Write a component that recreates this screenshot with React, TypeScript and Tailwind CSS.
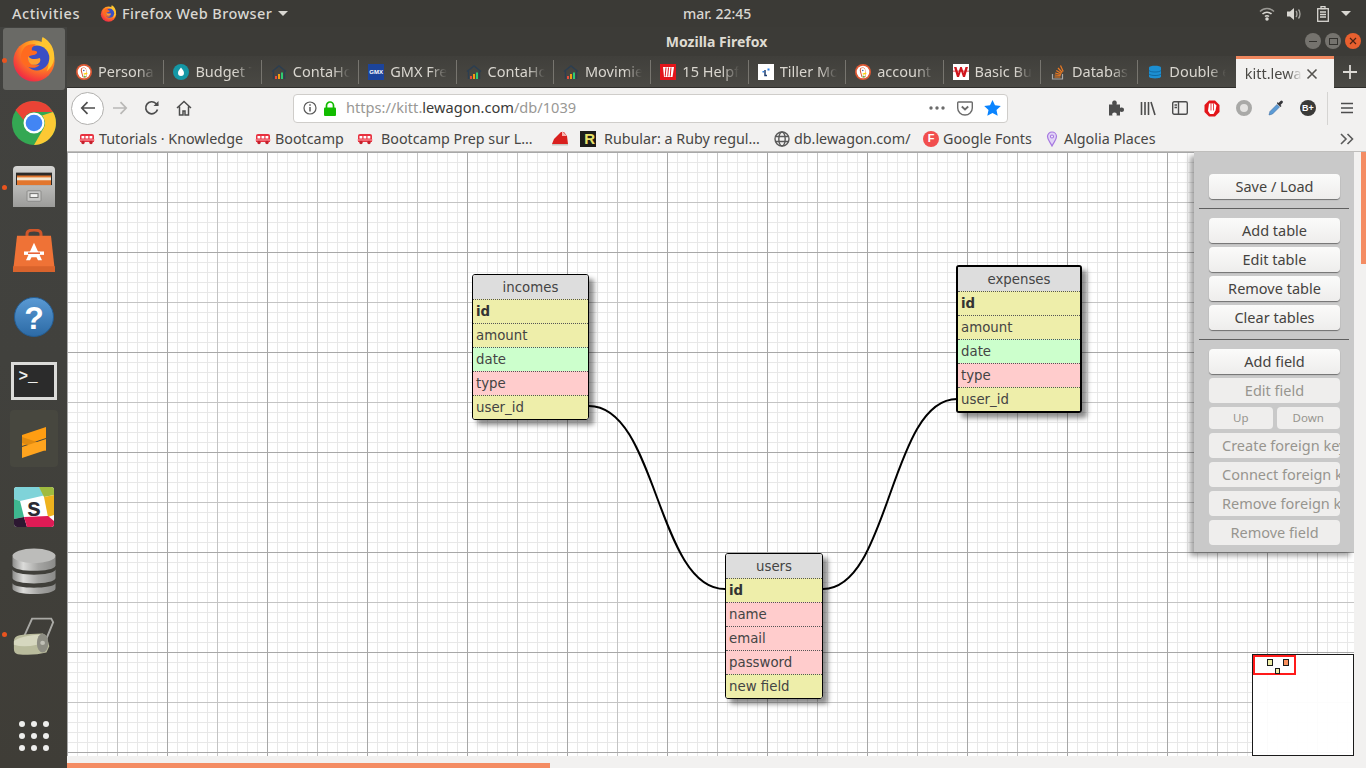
import { ReactNode } from 'react'

const UI = 'font-["Noto_Sans",sans-serif]'

function Ddg() {
  return (
    <svg width="16" height="16" viewBox="0 0 16 16">
      <circle cx="8" cy="8" r="8" fill="#de5833" />
      <circle cx="8" cy="8" r="6.3" fill="#fff" />
      <path d="M5 4.500c1.500-1.500 4-1.300 5 .3 1 2 .3 5 .8 8.200-2 .6-3.400.6-4.300.1C6 10 4 7 5 4.500z" fill="#de5833" />
      <path d="M6 4.500c1.500-1 3.500-.5 4 1 .6 2 0 4.500.5 7-1.500.4-2.500.4-3.300.1C7 10 5.200 6.500 6 4.500z" fill="#fff" />
      <path d="M7.500 9.500l3.500-1 .5 1.500-3.500.7z" fill="#fdd20a" />
      <path d="M7.500 11.500l2 .4.700 1.300-2.200.2z" fill="#65bc46" />
      <circle cx="7.800" cy="6.500" r=".7" fill="#2d4f8e" />
    </svg>
  )
}

function Budget() {
  return (
    <svg width="16" height="16" viewBox="0 0 16 16">
      <circle cx="8" cy="8" r="8" fill="#1497a5" />
      <path d="M8 3.500c1.500 2 3 3.500 3 5.500a3 3 0 0 1-6 0c0-2 1.500-3.500 3-5.500z" fill="#fff" />
    </svg>
  )
}

function Conta() {
  return (
    <svg width="16" height="16" viewBox="0 0 16 16">
      <path d="M1 7.500L8 2l7 5.500M2.500 7v8M13.500 7v8" fill="none" stroke="#2c3e50" strokeWidth="1.400" />
      <rect x="4" y="12" width="2" height="3" fill="#e74c3c" />
      <rect x="7" y="10" width="2" height="5" fill="#f39c12" />
      <rect x="10" y="8.500" width="2" height="6.500" fill="#2ecc71" />
    </svg>
  )
}

function Gmx() {
  return (
    <div className="flex h-4 w-4 items-center justify-center bg-[#1c449b] font-['Liberation_Sans',sans-serif] text-[6px] font-bold leading-none text-white">
      GMX
    </div>
  )
}

function Helpful() {
  return (
    <svg width="16" height="16" viewBox="0 0 16 16">
      <rect width="16" height="16" fill="#e3151a" />
      <path d="M3 3h11l-1.500 10h-8.500z" fill="#fff" />
      <path d="M6 3.500l-.8 9M8.500 3.500l-.8 9M11 3.500l-.8 9" stroke="#e3151a" strokeWidth="1" />
    </svg>
  )
}

function Tiller() {
  return (
    <svg width="16" height="16" viewBox="0 0 16 16">
      <rect width="16" height="16" fill="#fff" />
      <path d="M7 6v5.500h2" fill="none" stroke="#1d3d6e" strokeWidth="1.500" />
      <rect x="9.500" y="4.500" width="2" height="2" fill="#2a7de1" />
      <rect x="4.500" y="7" width="1.500" height="1.500" fill="#2a7de1" />
    </svg>
  )
}

function Basic() {
  return (
    <svg width="16" height="16" viewBox="0 0 16 16">
      <rect width="16" height="16" fill="#fff" />
      <path d="M1 3l3 10h2l2-6 2 6h2l3-10h-2.500l-1.700 6L8.800 3H7.200L5.200 9 3.500 3z" fill="#d0141c" />
      <rect y="6.500" width="16" height="1.300" fill="#d0141c" opacity=".6" />
    </svg>
  )
}

function Stack() {
  return (
    <svg width="16" height="16" viewBox="0 0 16 16">
      <path d="M2.500 10v5h10v-5" fill="none" stroke="#a8a8a8" strokeWidth="1.200" />
      <path d="M4.500 13h6M4.700 11l6 .5M5.200 9l5.800 1.500M6.300 6.500l5.200 3M8 4l4.300 4.500M10.500 1.500l2.700 6" stroke="#ef7a21" strokeWidth="1.200" />
    </svg>
  )
}

function DbFav() {
  return (
    <svg width="16" height="16" viewBox="0 0 16 16">
      <path d="M2 3.500C2 1 14 1 14 3.500v9c0 2.500-12 2.500-12 0z" fill="#1c8fd2" />
      <path d="M2 6.500c1.500 2 10.500 2 12 0M2 10c1.500 2 10.500 2 12 0" fill="none" stroke="#0d5f96" strokeWidth=".8" />
    </svg>
  )
}

function Bus() {
  return (
    <svg width="16" height="12" viewBox="0 0 16 12">
      <path d="M1 2.500Q1 1 3 1h10q2 0 2 1.500V9H1z" fill="#e8313f" />
      <rect x="2.500" y="3" width="2.800" height="2.500" fill="#fff" />
      <rect x="6.500" y="3" width="2.800" height="2.500" fill="#fff" />
      <rect x="10.500" y="3" width="2.800" height="2.500" fill="#fff" />
      <rect x="0" y="6.500" width="16" height="1" fill="#f9a6ac" />
      <circle cx="4" cy="9.500" r="1.700" fill="#c3202c" />
      <circle cx="12" cy="9.500" r="1.700" fill="#c3202c" />
    </svg>
  )
}

const tabs: { icon: ReactNode; label: string }[] = [
  { icon: <Ddg />, label: 'Persona' },
  { icon: <Budget />, label: 'Budget T' },
  { icon: <Conta />, label: 'ContaHo' },
  { icon: <Gmx />, label: 'GMX Fre' },
  { icon: <Conta />, label: 'ContaHo' },
  { icon: <Conta />, label: 'Movimie' },
  { icon: <Helpful />, label: '15 Helpf' },
  { icon: <Tiller />, label: 'Tiller Mo' },
  { icon: <Ddg />, label: 'account' },
  { icon: <Basic />, label: 'Basic Bu' },
  { icon: <Stack />, label: 'Databas' },
  { icon: <DbFav />, label: 'Double e' },
]

function FirefoxLogo({ size }: { size: number }) {
  return (
    <svg width={size} height={size} viewBox="0 0 48 48">
      <defs>
        <radialGradient id="ffo" cx="0.7" cy="0.2" r="1">
          <stop offset="0" stopColor="#ffd43a" />
          <stop offset="0.45" stopColor="#ff8a1f" />
          <stop offset="0.8" stopColor="#f3353f" />
          <stop offset="1" stopColor="#d5166a" />
        </radialGradient>
      </defs>
      <circle cx="24" cy="26" r="21.500" fill="url(#ffo)" />
      <path d="M33 1c8 4 13 13 12 23-1 6-4 10-8 13 3-6 3-12 0-17-2-4-6-6-5-12 0-3 0-5 1-7z" fill="#ffc52e" />
      <circle cx="27" cy="23" r="13" fill="#3a4fc4" />
      <path d="M14 12c3-3 8-4 12-3-4 2-5 4-4 6 4 0 6 1 5 3-2 3-8 1-9 5-1 4 5 9 12 7-3 4-12 5-17-1-4-5-3-12 1-17z" fill="#ff6a1f" />
      <path d="M18 21c2 3 7 4 12 2 2 3-1 8-7 7-4-1-6-5-5-9z" fill="#ffa030" />
    </svg>
  )
}

function TopBar() {
  return (
    <div className={`${UI} flex h-[27px] items-center bg-[#3b3a36] text-[14px] font-medium text-[#d9d7d2]`}>
      <span className="ml-3 w-[88px] text-[14.500px] tracking-[0.55px]">Activities</span>
      <FirefoxLogo size={17} />
      <span className="ml-[5px] text-[14.500px] tracking-[0.4px]">Firefox Web Browser</span>
      <svg width="10" height="5" viewBox="0 0 10 5" className="ml-[6px]"><path d="M0 0h10L5 5z" fill="#d9d7d2" /></svg>
      <span className="absolute left-[683px]">mar. 22:45</span>
      <div className="ml-auto mr-[15px] flex items-center">
        <svg width="16" height="14" viewBox="0 0 16 14" fill="none" stroke="#d9d7d2" strokeWidth="1.500">
          <path d="M1 4.500c4-4 10-4 14 0" opacity=".6" />
          <path d="M3.500 7c2.500-2.500 6.500-2.500 9 0" />
          <path d="M6 9.500c1-1 3-1 4 0" />
          <circle cx="8" cy="12" r="1" fill="#d9d7d2" />
        </svg>
        <svg width="16" height="14" viewBox="0 0 16 14" fill="none" className="ml-[11px]">
          <path d="M1 4.500h3L8 1v12L4 9.500H1z" fill="#d9d7d2" />
          <path d="M10 4c1.300 1.500 1.300 4.500 0 6M12.500 2.500c2 2.500 2 6.500 0 9" stroke="#d9d7d2" strokeWidth="1.300" opacity=".7" />
        </svg>
        <svg width="12" height="16" viewBox="0 0 12 16" fill="none" stroke="#d9d7d2" strokeWidth="1.300" className="ml-[15px]">
          <rect x=".7" y="2.700" width="10.600" height="12.600" />
          <path d="M4 .7h4v2H4zM3 6h6M3 8.500h6M3 11h6" />
        </svg>
        <svg width="10" height="5" viewBox="0 0 10 5" className="ml-[12px]"><path d="M0 0h10L5 5z" fill="#d9d7d2" /></svg>
      </div>
    </div>
  )
}

function TitleBar() {
  return (
    <div className={`${UI} relative flex h-[29px] items-center justify-center bg-[#3c3b37] text-[14px] font-bold text-[#dfdbd2]`}>
      Mozilla Firefox
      <div className="absolute right-[5px] top-[6px] flex gap-[4px]">
        <div className="flex h-[16px] w-[16px] items-center justify-center rounded-full bg-[#75736e]">
          <div className="h-[1px] w-[8px] bg-[#33322e]" />
        </div>
        <div className="flex h-[16px] w-[16px] items-center justify-center rounded-full bg-[#75736e]">
          <div className="h-[7px] w-[9px] border border-[#33322e]" />
        </div>
        <div className="flex h-[16px] w-[16px] items-center justify-center rounded-full bg-[#e9602f]">
          <svg width="8" height="8" viewBox="0 0 8 8"><path d="M1 1l6 6M7 1L1 7" stroke="#4a2214" strokeWidth="1.200" /></svg>
        </div>
      </div>
    </div>
  )
}

function TabStrip() {
  return (
    <div className={`${UI} flex h-[32px] items-stretch border-b border-[#2f2e2b] bg-[linear-gradient(to_bottom,#403f3b,#4a4944)] text-[14.500px] text-[#d9d6cf]`}>
      {tabs.map((t, i) => (
        <div key={i} className="flex w-[97.400px] shrink-0 items-center">
          <div className="ml-[9px] flex w-[16px] shrink-0 justify-center">{t.icon}</div>
          <div className="ml-[6px] w-[57px] overflow-hidden whitespace-nowrap [mask-image:linear-gradient(to_right,#000_70%,transparent)]">
            {t.label}
          </div>
          {i < tabs.length - 1 && <div className="ml-auto h-[24px] w-[1px] bg-[#77756f]" />}
        </div>
      ))}
      <div className="mb-[-1px] flex w-[98px] shrink-0 items-center border-t-[3px] border-[#f0875e] bg-[#f2f1f0] pl-[9px] text-[#4a4945]">
        <div className="w-[57px] overflow-hidden whitespace-nowrap [mask-image:linear-gradient(to_right,#000_75%,transparent)]">
          kitt.lewa
        </div>
        <svg width="12" height="12" viewBox="0 0 12 12" className="ml-[4px]"><path d="M1.500 1.500l9 9M10.500 1.500l-9 9" stroke="#55534f" strokeWidth="1.600" /></svg>
      </div>
      <div className="ml-[9px] flex items-center">
        <svg width="14" height="14" viewBox="0 0 14 14"><path d="M7 0v14M0 7h14" stroke="#dcdad5" strokeWidth="1.800" /></svg>
      </div>
    </div>
  )
}

function NavBar() {
  return (
    <div className={`${UI} flex h-[40px] items-center bg-[#f2f1f0]`}>
      <div className="ml-[4px] flex h-[33px] w-[33px] items-center justify-center rounded-full border border-[#b1b0ae] bg-white">
        <svg width="16" height="14" viewBox="0 0 16 14" fill="none" stroke="#4d4d4d" strokeWidth="1.700"><path d="M15 7H2M7.500 1.200L1.800 7l5.700 5.800" /></svg>
      </div>
      <svg width="16" height="14" viewBox="0 0 16 14" fill="none" stroke="#b9b8b6" strokeWidth="1.700" className="ml-[8px]"><path d="M1 7h13M8.500 1.200L14.200 7l-5.700 5.800" /></svg>
      <svg width="16" height="16" viewBox="0 0 16 16" fill="none" stroke="#4d4d4d" strokeWidth="1.700" className="ml-[16px]">
        <path d="M13.500 9.500A6 6 0 1 1 12 3.500L14 5.500" />
        <path d="M14.500 1v5h-5" fill="#4d4d4d" stroke="none" />
      </svg>
      <svg width="16" height="16" viewBox="0 0 16 16" fill="none" stroke="#4d4d4d" strokeWidth="1.500" className="ml-[16px]">
        <path d="M1 8l7-6.500L15 8M3.500 6.500V15H7v-4h2v4h3.500V6.500" />
      </svg>
      <div className="ml-[101px] flex h-[29px] w-[715px] items-center rounded-[4px] border border-[#cfcdca] bg-white text-[14.600px]">
        <svg width="14" height="14" viewBox="0 0 14 14" fill="none" stroke="#5a5a5a" className="ml-[9px]">
          <circle cx="7" cy="7" r="6" strokeWidth="1.200" />
          <path d="M7 6v4.500" strokeWidth="1.500" />
          <path d="M7 3.200v1.500" strokeWidth="1.500" />
        </svg>
        <svg width="14" height="15" viewBox="0 0 14 15" className="ml-[6px]">
          <path d="M3.500 7V4.500a3.500 3.500 0 0 1 7 0V7" fill="none" stroke="#12bc00" strokeWidth="1.700" />
          <rect x="1" y="6.500" width="12" height="8.500" rx="1" fill="#12bc00" />
        </svg>
        <span className="ml-[9px] whitespace-nowrap text-[#999895]">
          https://kitt.<span className="text-[#3a3a38]">lewagon.com</span>/db/1039
        </span>
        <div className="ml-auto mr-[6px] flex items-center">
          <svg width="16" height="4" viewBox="0 0 16 4" fill="#6b6b6b"><circle cx="2" cy="2" r="1.700" /><circle cx="8" cy="2" r="1.700" /><circle cx="14" cy="2" r="1.700" /></svg>
          <svg width="16" height="15" viewBox="0 0 16 15" fill="none" stroke="#6b6b6b" strokeWidth="1.400" className="ml-[12px]">
            <path d="M1.500 1h13q.8 0 .8.800V7a7.300 7 0 0 1-14.600 0V1.800q0-.8.800-.8z" />
            <path d="M4.800 5.500L8 8.500l3.200-3" strokeWidth="1.800" />
          </svg>
          <svg width="17" height="16" viewBox="0 0 17 16" className="ml-[11px]">
            <path d="M8.500 0l2.500 5.300 5.800.7-4.300 4 1.200 5.800-5.200-2.900-5.200 2.900 1.200-5.800L.2 6l5.800-.7z" fill="#0a84ff" />
          </svg>
        </div>
      </div>
      <svg width="17" height="16" viewBox="0 0 17 16" fill="#4d4d4d" className="ml-[100px]">
        <path d="M1 4.500h3.500C3.500 2 5 .5 6.500.5S9.500 2 8.500 4.500H12v3.500c2-1 4-.3 4 1.700S14 12.500 12 11.500V15.500H8.500c1-2-.5-3-2-3s-3 1-2 3H1z" />
      </svg>
      <svg width="16" height="15" viewBox="0 0 16 15" fill="none" stroke="#4d4d4d" strokeWidth="1.600" className="ml-[15px]">
        <path d="M1.500 1v13M5 1v13M8.500 1v13M11 1l4 13" />
      </svg>
      <svg width="16" height="14" viewBox="0 0 16 14" fill="none" stroke="#4d4d4d" strokeWidth="1.400" className="ml-[16px]">
        <rect x=".7" y=".7" width="14.600" height="12.600" rx="1.500" />
        <path d="M6.500 1v12M2.500 4h2.500M2.500 6.500h2.500" />
      </svg>
      <svg width="16" height="17" viewBox="0 0 16 17" className="ml-[16px]">
        <path d="M5 .5h6L15.500 5v7L11 16.500H5L.5 12V5z" fill="#e3151a" />
        <path d="M5 3.500h5.500l2 2 -1 5-2 3.500H6l-2-3z" fill="#fff" />
        <path d="M7 3.500v7M9.500 3.500v7" stroke="#e3151a" strokeWidth=".8" />
      </svg>
      <div className="ml-[16px] h-[16px] w-[16px] rounded-full border-[4px] border-[#a9a9a7] bg-[#e4e3e1]" />
      <svg width="16" height="16" viewBox="0 0 16 16" className="ml-[16px]">
        <path d="M1 15l1-3.500 7-7 2.500 2.500-7 7z" fill="#5b9bd5" stroke="#3e6fa5" strokeWidth=".6" />
        <path d="M9 3.500l3.500 3.500 1-1-1-1 2-2a1.400 1.400 0 0 0-2-2l-2 2-1-1z" fill="#35363a" />
      </svg>
      <div className="ml-[16px] flex h-[16px] w-[16px] items-center justify-center rounded-full bg-[#3a3a38] font-['Liberation_Sans',sans-serif] text-[9px] font-bold leading-none text-white">
        B+
      </div>
      <div className="ml-[11px] h-[33px] w-[1px] bg-[#d5d4d2]" />
      <svg width="12" height="12" viewBox="0 0 12 12" fill="none" stroke="#4d4d4d" strokeWidth="1.700" className="ml-[13px]">
        <path d="M0 1.500h12M0 6h12M0 10.500h12" />
      </svg>
    </div>
  )
}

function Bookmark({ w, icon, label, gap = 'ml-[4px]' }: { w: string; icon: ReactNode; label?: string; gap?: string }) {
  return (
    <div className={`flex shrink-0 items-center ${w}`}>
      <div className="flex w-[16px] shrink-0 justify-center">{icon}</div>
      {label && <span className={`${gap} whitespace-nowrap`}>{label}</span>}
    </div>
  )
}

function BookmarksBar() {
  return (
    <div className={`${UI} flex h-[23px] items-center bg-[#f2f1f0] pb-[2px] pl-[12px] text-[14.300px] text-[#474644]`}>
      <Bookmark w="w-[176px]" icon={<Bus />} label="Tutorials · Knowledge" />
      <Bookmark w="w-[102px]" icon={<Bus />} label="Bootcamp" />
      <Bookmark w="w-[195px]" gap="ml-[8px]" icon={<Bus />} label="Bootcamp Prep sur L…" />
      <Bookmark w="w-[28px]" icon={
        <svg width="16" height="15" viewBox="0 0 16 15">
          <path d="M0 13l2-5 7-7h3l3 4 1 8z" fill="#d9201e" />
          <path d="M10 0l5 5h-5z" fill="#f7b6b2" />
          <rect y="13" width="16" height="1.500" fill="#c9c7c1" />
        </svg>
      } />
      <Bookmark w="w-[194px]" gap="ml-[8px]" icon={
        <div className="flex h-4 w-4 items-center justify-end bg-[#1d1d1b] pr-[1px] font-['Liberation_Sans',sans-serif] text-[15px] font-bold leading-none text-[#e8e26a]">R</div>
      } label="Rubular: a Ruby regul…" />
      <Bookmark w="w-[149px]" icon={
        <svg width="16" height="16" viewBox="0 0 16 16" fill="none" stroke="#5a5a5a" strokeWidth="1.400">
          <circle cx="8" cy="8" r="7" />
          <ellipse cx="8" cy="8" rx="3.200" ry="7" />
          <path d="M1.500 5.500h13M1.500 10.500h13" />
        </svg>
      } label="db.lewagon.com/" />
      <Bookmark w="w-[122px]" icon={
        <div className="flex h-4 w-4 items-center justify-center rounded-full bg-[#f14e4e] font-['Liberation_Sans',sans-serif] text-[11px] font-bold leading-none text-white">F</div>
      } label="Google Fonts" />
      <div className="flex shrink-0 items-center">
        <svg width="14" height="16" viewBox="0 0 14 16" fill="#e2d3f7" stroke="#a678e0" strokeWidth="1.200">
          <path d="M7 15C5 11 2.500 8.500 2.500 5.500a4.500 4.500 0 0 1 9 0C11.500 8.500 9 11 7 15z" />
          <circle cx="7" cy="5.500" r="1.500" fill="#fff" />
        </svg>
        <span className="ml-[5px] whitespace-nowrap">Algolia Places</span>
      </div>
      <svg width="14" height="12" viewBox="0 0 14 12" fill="none" stroke="#5a5a5a" strokeWidth="1.600" className="ml-auto mr-[12px]">
        <path d="M1 1l5 5-5 5M7.500 1l5 5-5 5" />
      </svg>
    </div>
  )
}

function Dock() {
  return (
    <div className="flex w-[67px] shrink-0 flex-col items-center bg-[linear-gradient(to_bottom,#42423f,#41413d_45%,#3f3d37)]">
      <div className="mt-[1px] flex h-[62px] w-[62px] shrink-0 items-center justify-center rounded-[3px] bg-[#6a6a66]">
        <FirefoxLogo size={46} />
      </div>
      <svg width="44" height="44" viewBox="0 0 44 44" className="mt-[11px] shrink-0">
        <circle cx="22" cy="22" r="22" fill="#34a853" />
        <path d="M22 0a22 22 0 0 1 19 11H22a11 11 0 0 0-10.500 8L3.500 9A22 22 0 0 1 22 0z" fill="#ea4335" />
        <path d="M41 11a22 22 0 0 1-19 33l9.500-16.500A11 11 0 0 0 30 14.500z" fill="#fcc934" />
        <circle cx="22" cy="22" r="10.500" fill="#fff" />
        <circle cx="22" cy="22" r="8.300" fill="#4285f4" />
      </svg>
      <svg width="42" height="42" viewBox="0 0 42 44" preserveAspectRatio="none" className="mt-[20px] shrink-0">
        <defs>
          <linearGradient id="fg" x1="0" y1="0" x2="0" y2="1"><stop offset="0" stopColor="#d6d6d4" /><stop offset="1" stopColor="#9c9c9a" /></linearGradient>
        </defs>
        <path d="M0 5q0-4 4-4h34q4 0 4 4v39H0z" fill="url(#fg)" />
        <rect x="3" y="8" width="36" height="13" fill="#2c2a28" />
        <rect x="4" y="11" width="34" height="10" fill="#e2762e" />
        <rect x="4" y="13" width="34" height="3" fill="#f3e6cf" />
        <rect x="14" y="27" width="14" height="11" rx="1" fill="#c8c8c6" stroke="#8b8b89" />
        <rect x="17" y="30" width="8" height="4" fill="#f5f5f3" stroke="#6e6e6c" />
      </svg>
      <svg width="42" height="43" viewBox="0 0 42 44" preserveAspectRatio="none" className="mt-[22px] shrink-0">
        <path d="M14 10V5q0-4 7-4t7 4v5" fill="none" stroke="#d0562a" strokeWidth="3" />
        <path d="M4 7h34l4 37H0z" fill="#ef7236" />
        <path d="M0 38h42v6H0z" fill="#d9632c" />
        <path d="M21 14l8 18h-4l-1.500-3h-5L17 32h-4z" fill="#fff" />
        <rect x="11" y="23" width="20" height="3.500" fill="#fff" />
        <rect x="15" y="24" width="12" height="1.500" fill="#e5582a" />
      </svg>
      <svg width="40" height="40" viewBox="0 0 40 40" className="mt-[25px] shrink-0">
        <defs>
          <linearGradient id="hp" x1="0" y1="0" x2="0" y2="1"><stop offset="0" stopColor="#5a9ad4" /><stop offset="1" stopColor="#2c6aa5" /></linearGradient>
        </defs>
        <circle cx="20" cy="20" r="19.500" fill="url(#hp)" stroke="#245d93" />
        <text x="20" y="32" textAnchor="middle" fill="#fff" fontSize="32" fontWeight="700" fontFamily="'Liberation Sans',sans-serif">?</text>
      </svg>
      <div className="mt-[25px] flex h-[38px] w-[46px] shrink-0 items-start border-[3px] border-[#dbdbd9] bg-[#2b2b2b] pl-[5px] pt-[4px] font-['Liberation_Mono',monospace] text-[16px] font-bold leading-[16px] text-[#eeeeec]">
        &gt;_
      </div>
      <div className="mt-[10px] flex h-[57px] w-[48px] shrink-0 items-start justify-center rounded-[4px] bg-[#47473f] pt-[17px]">
        <svg width="24" height="31" viewBox="0 0 24 31">
          <path d="M0 8L24 0v11L0 19z" fill="#ff9d12" />
          <path d="M0 10l24 8v6L0 16z" fill="#e08a10" />
          <path d="M0 20l24-8v11L0 31z" fill="#ffa41e" />
        </svg>
      </div>
      <svg width="40" height="40" viewBox="0 0 40 40" className="mt-[20px] shrink-0">
        <rect width="40" height="40" rx="3" fill="#fff" />
        <path d="M0 3q0-3 3-3h22L32 8 6 14 0 12z" fill="#7fd3d9" />
        <path d="M25 0h12q3 0 3 3v5L30 10z" fill="#9fbb3f" />
        <path d="M30 10l10-2v20l-6 2z" fill="#eeb21e" />
        <path d="M6 14L0 12v20l10-2z" fill="#3eb890" />
        <path d="M10 30L0 32v5q0 3 3 3h10z" fill="#2c1731" />
        <path d="M10 30l24-1 6 5v3q0 3-3 3H13z" fill="#de1b55" />
        <text x="20" y="29" textAnchor="middle" fill="#2a2a33" fontSize="25" fontWeight="700" fontFamily="'Liberation Sans',sans-serif">s</text>
      </svg>
      <svg width="44" height="47" viewBox="0 0 44 48" className="mt-[21px] shrink-0">
        <defs>
          <linearGradient id="dbg" x1="0" y1="0" x2="1" y2="0"><stop offset="0" stopColor="#8d8d8b" /><stop offset=".25" stopColor="#dcdcda" /><stop offset=".6" stopColor="#a5a5a3" /><stop offset="1" stopColor="#8a8a88" /></linearGradient>
        </defs>
        <path d="M0 36v5c0 8 44 8 44 0v-5c-2 6-42 6-44 0z" fill="url(#dbg)" />
        <path d="M0 22v9c2 7 42 7 44 0v-9c-2 7-42 7-44 0z" fill="url(#dbg)" />
        <path d="M0 9v9c2 7 42 7 44 0V9z" fill="url(#dbg)" />
        <ellipse cx="22" cy="8" rx="22" ry="7.500" fill="#bcbcba" />
      </svg>
      <svg width="44" height="38" viewBox="0 0 46 44" preserveAspectRatio="none" className="mt-[22px] shrink-0">
        <path d="M12 24L21 2h20l2 4-11 30" fill="none" stroke="#a9a9a5" strokeWidth="2" />
        <path d="M2 28q0-6 6-7 10-2 24-2l4 3 3 12-3 7q-14 4-30 2-4-1-4-6z" fill="#b9bb9c" />
        <path d="M2 28q6-6 30-8-6 4-6 12-14 4-24 0z" fill="#d6d7bf" />
        <ellipse cx="32" cy="30" rx="6" ry="11" fill="#8d8d83" />
        <circle cx="32" cy="30" r="2.500" fill="#c0c0b6" />
      </svg>
      <div className="mt-[66px] grid shrink-0 grid-cols-3 gap-[6px]">
        {Array.from({ length: 9 }).map((_, i) => (
          <div key={i} className="h-[6px] w-[6px] rounded-full bg-[#eeeeec]" />
        ))}
      </div>
      <div className="absolute left-[2px] top-[58px] h-[5px] w-[5px] rounded-full bg-[#e9541f]" />
      <div className="absolute left-[2px] top-[185px] h-[5px] w-[5px] rounded-full bg-[#e9541f]" />
      <div className="absolute left-[2px] top-[632px] h-[5px] w-[5px] rounded-full bg-[#e9541f]" />
    </div>
  )
}

type Field = { name: string; color: string; bold?: boolean }
const Y = 'bg-[#eeeeaa]'
const G = 'bg-[#ccffcc]'
const R = 'bg-[#ffcccc]'

function Table({ pos, title, fields, selected }: { pos: string; title: string; fields: Field[]; selected?: boolean }) {
  return (
    <div className={`absolute overflow-hidden rounded-[3px] font-['DejaVu_Sans',sans-serif] text-[13.333px] text-[#444] shadow-[5px_5px_5px_rgba(0,0,0,0.45)] ${selected ? 'border-2 border-black' : 'border border-black'} ${pos}`}>
      <div className="flex h-[24px] items-center justify-center bg-[#dddddd] pt-[2px]">{title}</div>
      {fields.map((f) => (
        <div key={f.name} className={`flex h-[24px] items-center border-t border-dotted border-[#555] pl-[3px] ${f.color} ${f.bold ? 'font-bold text-[#333]' : ''}`}>
          <span className="relative top-[0.500px]">{f.name}</span>
        </div>
      ))}
    </div>
  )
}

function MenuButton({ children, disabled, small, clip }: { children: ReactNode; disabled?: boolean; small?: boolean; clip?: boolean }) {
  const base = 'flex items-center overflow-hidden whitespace-nowrap rounded-[4px]'
  const tone = disabled ? 'bg-[#efeeed] text-[#97958f]' : 'bg-[linear-gradient(to_bottom,#fbfbfa,#eeedec)] text-[#45433f] shadow-[0_1px_1px_rgba(0,0,0,0.45)]'
  const size = small ? 'h-[22px] flex-1 justify-center text-[11.500px]' : 'h-[25px] w-full text-[14.500px]'
  const align = clip ? 'pl-[13px]' : 'justify-center'
  return <div className={`${base} ${tone} ${size} ${align}`}>{children}</div>
}

function Menu() {
  return (
    <div className={`${UI} absolute right-0 top-0 flex h-[400px] w-[160px] flex-col bg-[#c9c9c9] pl-[15px] pr-[14px] pt-[22px] shadow-[-4px_4px_5px_rgba(0,0,0,0.35)]`}>
      <MenuButton>Save / Load</MenuButton>
      <div className="-ml-[10px] -mr-[9px] my-[9px] h-[1px] shrink-0 bg-[#5f5f5f]" />
      <div className="flex flex-col gap-[4px]">
        <MenuButton>Add table</MenuButton>
        <MenuButton>Edit table</MenuButton>
        <MenuButton>Remove table</MenuButton>
        <MenuButton>Clear tables</MenuButton>
      </div>
      <div className="-ml-[10px] -mr-[9px] my-[9px] h-[1px] shrink-0 bg-[#5f5f5f]" />
      <div className="flex flex-col gap-[4px]">
        <MenuButton>Add field</MenuButton>
        <MenuButton disabled>Edit field</MenuButton>
        <div className="flex gap-[4px]">
          <MenuButton disabled small>Up</MenuButton>
          <MenuButton disabled small>Down</MenuButton>
        </div>
        <MenuButton disabled clip>Create foreign key</MenuButton>
        <MenuButton disabled clip>Connect foreign key</MenuButton>
        <MenuButton disabled clip>Remove foreign key</MenuButton>
        <MenuButton disabled>Remove field</MenuButton>
      </div>
    </div>
  )
}

function Minimap() {
  return (
    <div className="absolute left-[1185px] top-[502px] h-[102px] w-[102px] border border-[#1a1a1a] bg-white/95">
      <div className="absolute left-0 top-0 h-[20px] w-[43px] border-2 border-[#ff1a1a]" />
      <div className="absolute left-[14px] top-[4px] h-[7px] w-[6px] border border-[#1a1a1a] bg-[#eeeeaa]" />
      <div className="absolute left-[30px] top-[4px] h-[7px] w-[6px] border border-[#1a1a1a] bg-[#f98f5c]" />
      <div className="absolute left-[22px] top-[13px] h-[6px] w-[5px] border border-[#1a1a1a] bg-[#eeeeaa]" />
    </div>
  )
}

const incomes: Field[] = [
  { name: 'id', color: Y, bold: true },
  { name: 'amount', color: Y },
  { name: 'date', color: G },
  { name: 'type', color: R },
  { name: 'user_id', color: Y },
]

const users: Field[] = [
  { name: 'id', color: Y, bold: true },
  { name: 'name', color: R },
  { name: 'email', color: R },
  { name: 'password', color: R },
  { name: 'new field', color: Y },
]

function Canvas() {
  return (
    <div className="relative h-[604px] flex-1 overflow-hidden bg-white bg-[linear-gradient(to_right,#a8a8a8_1px,transparent_1px),linear-gradient(to_bottom,#a8a8a8_1px,transparent_1px),linear-gradient(to_right,#c4c4c4_1px,transparent_1px),linear-gradient(to_bottom,#c4c4c4_1px,transparent_1px),linear-gradient(to_right,#e8e8e8_1px,transparent_1px),linear-gradient(to_bottom,#e8e8e8_1px,transparent_1px)] [background-size:100px_100px,100px_100px,50px_50px,50px_50px,10px_10px,10px_10px]">
      <svg width="1287" height="604" className="absolute left-0 top-0" fill="none" stroke="#000" strokeWidth="2">
        <path d="M522 254C590 254 590 437 658 437" />
        <path d="M756 437C823 437 823 247 890 247" />
      </svg>
      <Table pos="left-[405px] top-[122px] w-[117px]" title="incomes" fields={incomes} />
      <Table pos="left-[889px] top-[113px] w-[126px]" title="expenses" fields={incomes} selected />
      <Table pos="left-[658px] top-[401px] w-[98px]" title="users" fields={users} />
      <Menu />
      <Minimap />
    </div>
  )
}

export default function App() {
  return (
    <div className="relative flex h-[768px] w-[1366px] flex-col overflow-hidden bg-[#f2f1f0]">
      <TopBar />
      <div className="flex flex-1">
        <Dock />
        <div className="flex flex-1 flex-col">
          <TitleBar />
          <TabStrip />
          <NavBar />
          <BookmarksBar />
          <div className="h-[1px] bg-[#bfbebc]" />
          <div className="flex flex-1 flex-col">
            <div className="flex">
              <Canvas />
              <div className="flex w-[12px] shrink-0 justify-end bg-[#f2f1f0]">
                <div className="h-[112px] w-[5px] bg-[#f48c63]" />
              </div>
            </div>
            <div className="mt-auto h-[5px] w-[483px] bg-[#f48c63]" />
          </div>
        </div>
      </div>
    </div>
  )
}
